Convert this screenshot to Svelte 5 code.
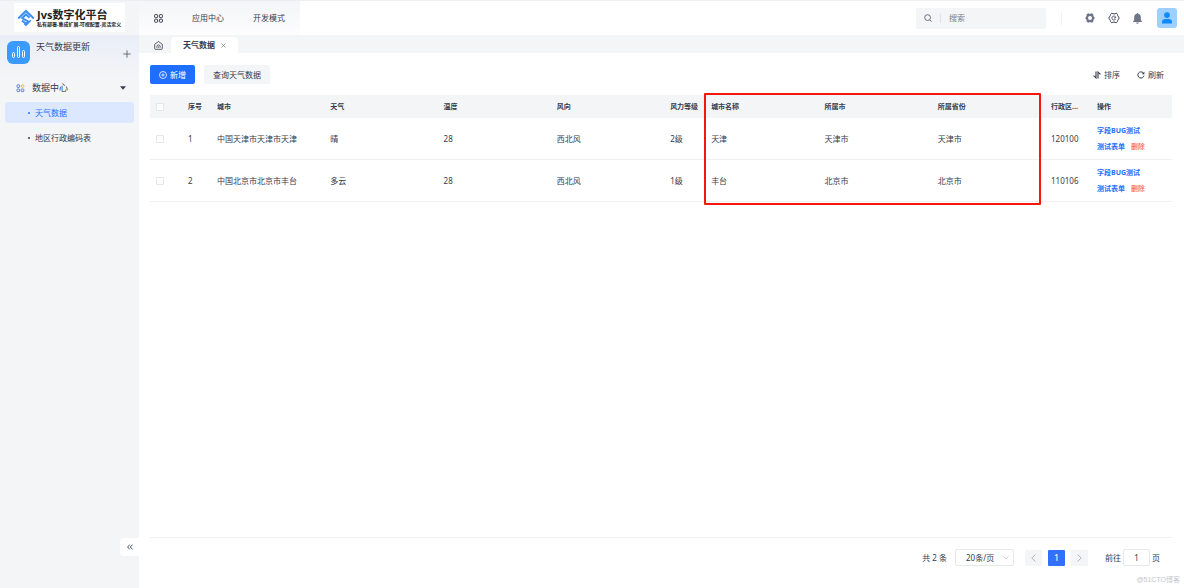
<script lang="ts">
	interface Row {
		id: number;
		city: string;
		weather: string;
		temp: string;
		wind: string;
		level: string;
		name: string;
		belongCity: string;
		province: string;
		code: string;
	}

	const columns = [
		{ label: '城市', cls: '' },
		{ label: '天气', cls: '' },
		{ label: '温度', cls: '' },
		{ label: '风向', cls: '' },
		{ label: '风力等级', cls: 'level' },
		{ label: '城市名称', cls: 'marked' },
		{ label: '所属市', cls: '' },
		{ label: '所属省份', cls: '' },
		{ label: '行政区...', cls: 'code' }
	];

	const rows: Row[] = [
		{
			id: 1,
			city: '中国天津市天津市天津',
			weather: '晴',
			temp: '28',
			wind: '西北风',
			level: '2级',
			name: '天津',
			belongCity: '天津市',
			province: '天津市',
			code: '120100'
		},
		{
			id: 2,
			city: '中国北京市北京市丰台',
			weather: '多云',
			temp: '28',
			wind: '西北风',
			level: '1级',
			name: '丰台',
			belongCity: '北京市',
			province: '北京市',
			code: '110106'
		}
	];

	const pages = ['天气数据', '地区行政编码表'];

	let activePage = $state('天气数据');
	let groupOpen = $state(true);
	let keyword = $state('');
	let selected = $state<number[]>([]);
	let pageSize = $state('20');
	let jumpTo = $state('1');

	let allSelected = $derived(selected.length === rows.length);

	function toggleAll() {
		selected = allSelected ? [] : rows.map((r) => r.id);
	}
</script>

<div class="app">
	<aside>
		<div class="brand">
			<div class="logo">
				<svg width="18" height="18" viewBox="0 0 18 18" fill="none" stroke="#3d8ef5" stroke-width="2">
					<path d="M1.200 9.400 9 2l7.800 7.400" />
					<path d="M12.600 8.700 9 5.400 5.200 9l6.200 3.600L9 14.800l-4-3.400" />
					<path d="M13.800 11.200 9 16.200l-1.600-1.400" stroke-width="1.600" />
				</svg>
				<div>
					<div class="logo-title">Jvs数字化平台</div>
					<div class="logo-sub">私有部署.集成扩展.可视配置.灵活定义</div>
				</div>
			</div>
		</div>

		<div class="side-body">
			<div class="project">
				<span class="project-icon">
					<svg width="15" height="15" viewBox="0 0 15 15" fill="none" stroke="#fff">
						<rect x="1.5" y="7.5" width="2" height="5" rx="1" />
						<rect x="6.5" y="1.5" width="2" height="11" rx="1" />
						<rect x="11.5" y="5.5" width="2" height="7" rx="1" />
					</svg>
				</span>
				<span class="project-name">天气数据更新</span>
				<button class="plain add" aria-label="添加">
					<svg width="8" height="8" viewBox="0 0 8 8" stroke="#5c6270" stroke-width="0.9">
						<path d="M4 0.3v7.4M0.3 4h7.4" />
					</svg>
				</button>
			</div>

			<button class="plain group" onclick={() => (groupOpen = !groupOpen)}>
				<svg width="9" height="9" viewBox="0 0 9 9" fill="none" stroke="#5279bd" stroke-width="0.9">
					<rect x="1" y="0.8" width="2.600" height="2.600" rx="0.600" />
					<path d="M6.600.5 8.200 2.100 6.600 3.700 5 2.100z" stroke="#f0a13c" />
					<rect x="1" y="5" width="2.600" height="2.600" rx="0.600" />
					<rect x="5.200" y="5" width="2.600" height="2.600" rx="0.600" />
				</svg>
				<span>数据中心</span>
				<svg class="caret" width="6" height="4" viewBox="0 0 6 4" fill="#363b4c"><path d="M0 .3h6L3 3.7z" /></svg>
			</button>

			{#if groupOpen}
				<nav>
					{#each pages as page}
						<a href="#{page}" class:active={activePage === page} onclick={() => (activePage = page)}>
							<i></i>{page}
						</a>
					{/each}
				</nav>
			{/if}

			<button class="plain collapse" aria-label="收起">
				<svg width="6" height="6" viewBox="0 0 6 6" fill="none" stroke="#363b4c" stroke-width="0.9">
					<path d="M2.8.6.6 3l2.2 2.4M5.5.6 3.3 3l2.2 2.4" />
				</svg>
			</button>
		</div>
	</aside>

	<div class="content">
		<header>
			<div class="menu">
				<svg width="9" height="9" viewBox="0 0 9 9" fill="none" stroke="#363b4c">
					<rect x="0.6" y="0.6" width="3" height="3" rx="0.700" />
					<rect x="5.4" y="0.6" width="3" height="3" rx="0.700" />
					<rect x="0.6" y="5.2" width="3" height="3" rx="0.700" />
					<rect x="5.4" y="5.2" width="3" height="3" rx="0.700" />
				</svg>
				<a href="#apps">应用中心</a>
				<a href="#dev">开发模式</a>
			</div>

			<label class="search">
				<svg width="8" height="8" viewBox="0 0 8 8" fill="none" stroke="#5c6270" stroke-width="0.9">
					<circle cx="3.6" cy="3.6" r="2.9" />
					<path d="m5.8 5.8 1.8 1.8" />
				</svg>
				<input type="text" placeholder="搜索" aria-label="搜索" bind:value={keyword} />
			</label>

			<div class="tools">
				<button class="plain" aria-label="设置">
					<svg width="10" height="10" viewBox="0 0 10 10">
						<path fill="#6f7588" fill-rule="evenodd" d="M3.2.3 5 1 6.800.300 8.300 1.300 8.400 3.100 9.800 5 8.400 6.900 8.300 8.700 6.800 9.700 5 9 3.200 9.700 1.700 8.700 1.600 6.900.2 5 1.600 3.100 1.700 1.300zM5 3a2 2 0 1 0 0 4 2 2 0 0 0 0-4z" />
					</svg>
				</button>
				<button class="plain" aria-label="系统配置">
					<svg width="12" height="12" viewBox="0 0 12 12" fill="none" stroke="#41475a">
						<path d="M3.600 1.200 5 1.800h2l1.400-.6 1 1.300.4 1.300L11.300 6 9.800 8.200l-.4 1.300-1 1.300-1.400-.6H5l-1.400.6-1-1.300-.4-1.300L.7 6l1.500-2.200.4-1.300z" />
						<path d="M7.700 7A2 2 0 1 1 7.900 5.600L6 6.100" stroke-width="0.900" />
					</svg>
				</button>
				<button class="plain" aria-label="通知">
					<svg width="9" height="11" viewBox="0 0 9 11" fill="#6f7588">
						<path d="M4.5 0c.5 0 .8.4.8.8C6.900 1.200 7.800 2.500 7.800 4v3L9 8.400v.600H0v-.600L1.200 7V4c0-1.500.9-2.800 2.500-3.200 0-.4.3-.8.8-.8z" />
						<path d="M3.200 9.500h2.600a1.300 1.300 0 0 1-2.600 0z" />
					</svg>
				</button>
				<button class="plain avatar" aria-label="用户">
					<svg width="10" height="12" viewBox="0 0 10 12" fill="#0f8bff">
						<circle cx="5" cy="3.1" r="2.9" />
						<path d="M0 11.500V10c0-2 1.300-3 3.200-3h3.600C8.700 7 10 8 10 10v1.500z" />
					</svg>
				</button>
			</div>
		</header>

		<div class="tabs">
			<button class="plain home" aria-label="首页">
				<svg width="9" height="9" viewBox="0 0 9 9" fill="none" stroke="#363b4c" stroke-width="0.8">
					<path d="M.7 3.300 4.500.5l3.800 2.800v4.200c0 .5-.3.800-.8.800h-6c-.5 0-.8-.3-.8-.8z" />
					<path d="M2.900 6.800V5.500a1.600 1.600 0 0 1 3.200 0v1.300M4.500 5.500v1.300" />
				</svg>
			</button>
			<div class="tab">
				<span>{activePage}</span>
				<button class="plain" aria-label="关闭">
					<svg width="5" height="5" viewBox="0 0 5 5" stroke="#6f7588" stroke-width="0.7"><path d="m.5.5 4 4m0-4-4 4" /></svg>
				</button>
			</div>
		</div>

		<main>
			<div class="toolbar">
				<button class="btn primary">
					<svg width="8" height="8" viewBox="0 0 8 8" fill="none" stroke="#fff" stroke-width="0.8">
						<circle cx="4" cy="4" r="3.5" />
						<path d="M4 2.400v3.200M2.400 4h3.200" />
					</svg>
					新增
				</button>
				<button class="btn">查询天气数据</button>
				<div class="actions">
					<button class="plain">
						<svg width="8" height="8" viewBox="0 0 8 8" fill="none" stroke="#363b4c" stroke-width="1.100">
							<path d="M3 .6v6.300L.6 4.700" />
							<path d="M5 7.400V1.100l2.400 2.200" />
						</svg>
						排序
					</button>
					<button class="plain">
						<svg width="8" height="8" viewBox="0 0 8 8" fill="none" stroke="#363b4c">
							<path d="M7 4.600A3.100 3.100 0 1 1 6.200 1.800" />
							<path d="M7.400.6v2.600H4.800z" fill="#363b4c" stroke="none" />
						</svg>
						刷新
					</button>
				</div>
			</div>

			<table>
				<thead>
					<tr>
						<th class="check"><input type="checkbox" aria-label="全选" checked={allSelected} onchange={toggleAll} /></th>
						<th class="index">序号</th>
						{#each columns as col}
							<th class={col.cls}>
								{col.label}
								{#if col.cls === 'marked'}<span class="mark"></span>{/if}
							</th>
						{/each}
						<th class="ops">操作</th>
					</tr>
				</thead>
				<tbody>
					{#each rows as row (row.id)}
						<tr>
							<td class="check"><input type="checkbox" aria-label="选择 {row.id}" value={row.id} bind:group={selected} /></td>
							<td>{row.id}</td>
							<td>{row.city}</td>
							<td>{row.weather}</td>
							<td>{row.temp}</td>
							<td>{row.wind}</td>
							<td>{row.level}</td>
							<td>{row.name}</td>
							<td>{row.belongCity}</td>
							<td>{row.province}</td>
							<td>{row.code}</td>
							<td class="ops">
								<div class="links">
									<button class="plain link">字段BUG测试</button>
									<button class="plain link">测试表单</button>
									<button class="plain link danger">删除</button>
								</div>
							</td>
						</tr>
					{/each}
				</tbody>
			</table>

			<footer>
				<span>共 {rows.length} 条</span>
				<div class="size">
					<select aria-label="每页条数" bind:value={pageSize}>
						<option value="10">10条/页</option>
						<option value="20">20条/页</option>
						<option value="50">50条/页</option>
					</select>
					<svg width="6" height="4" viewBox="0 0 6 4" fill="none" stroke="#b8bcc6" stroke-width="0.7"><path d="m.5.500 2.500 2.500L5.500.5" /></svg>
				</div>
				<div class="pager">
					<button aria-label="上一页" disabled>
						<svg width="5" height="8" viewBox="0 0 5 8" fill="none" stroke="#a9adb7" stroke-width="0.9"><path d="M4.400.600.800 4l3.600 3.400" /></svg>
					</button>
					<button class="current">1</button>
					<button aria-label="下一页" disabled>
						<svg width="5" height="8" viewBox="0 0 5 8" fill="none" stroke="#a9adb7" stroke-width="0.9"><path d="M.600.600 4.200 4 .600 7.400" /></svg>
					</button>
				</div>
				<label class="jump">
					前往
					<input type="text" bind:value={jumpTo} />
					页
				</label>
			</footer>
		</main>
	</div>

	<span class="watermark">@51CTO博客</span>
</div>

<style>
	:global(body) {
		margin: 0;
		background: #fff;
		color: #363b4c;
		font-family: 'Noto Sans', 'Noto Sans CJK SC', sans-serif;
		font-size: 8px;
		line-height: 12px;
	}

	.app {
		position: relative;
		display: flex;
		min-height: 100vh;
	}

	svg {
		display: block;
		flex: none;
	}

	a {
		color: inherit;
		text-decoration: none;
	}

	button,
	input,
	select {
		box-sizing: border-box;
		margin: 0;
		font: inherit;
		color: inherit;
	}

	button {
		cursor: pointer;
	}

	.plain {
		display: flex;
		align-items: center;
		padding: 0;
		border: none;
		background: none;
	}

	aside {
		display: flex;
		flex-direction: column;
		width: 139px;
		flex: none;
		background: #f4f5f7;
	}

	.brand {
		box-sizing: border-box;
		height: 35px;
		padding: 2px 14px;
		border-top: 1px solid #eceef1;
	}

	.logo {
		display: flex;
		align-items: center;
		gap: 2px;
		box-sizing: border-box;
		height: 29px;
		padding-left: 3px;
		background: #fff;
		color: #222;
		font-weight: 700;
		white-space: nowrap;
	}

	.logo-title {
		font-size: 11px;
	}

	.logo-sub {
		font-size: 5px;
		line-height: 6px;
	}

	.side-body {
		flex: 1;
		display: flex;
		flex-direction: column;
		background: linear-gradient(#e9eef7, #f4f5f7 48px);
	}

	.project {
		display: flex;
		padding: 6px 8px 6px 7px;
		font-size: 9px;
	}

	.project-icon {
		display: flex;
		align-items: center;
		justify-content: center;
		width: 23px;
		height: 23px;
		margin-right: 6px;
		border-radius: 6px;
		background: #3a9aff;
	}

	.add {
		margin-left: auto;
		padding-top: 2px;
	}

	.group {
		gap: 7px;
		height: 24px;
		margin-top: 6px;
		padding: 0 13px 0 16px;
		font-size: 9px;
	}

	.caret {
		margin-left: auto;
	}

	nav {
		display: flex;
		flex-direction: column;
		gap: 4px;
		padding: 2px 5px;
	}

	nav a {
		display: flex;
		align-items: center;
		gap: 5px;
		height: 21px;
		padding-left: 23px;
		border-radius: 3px;
	}

	nav i {
		width: 2px;
		height: 2px;
		border-radius: 50%;
		background: currentColor;
	}

	nav a.active {
		background: #dce8ff;
		color: #1e6fff;
	}

	.collapse {
		justify-content: center;
		align-self: flex-end;
		width: 19px;
		height: 18px;
		margin-top: auto;
		margin-bottom: 32px;
		border-radius: 4px 0 0 4px;
		background: #fff;
	}

	.content {
		flex: 1;
		min-width: 0;
		display: flex;
		flex-direction: column;
	}

	header {
		display: flex;
		align-items: center;
		box-sizing: border-box;
		height: 35px;
		padding-right: 7px;
		border-top: 1px solid #eceef1;
	}

	.menu {
		display: flex;
		align-items: center;
		gap: 29px;
		align-self: stretch;
		padding: 0 15px;
		background: linear-gradient(#f4f5f7, #fdfdfe);
	}

	.search {
		display: flex;
		align-items: center;
		box-sizing: border-box;
		width: 130px;
		height: 21px;
		margin-left: auto;
		padding: 0 8px;
		border-radius: 2px;
		background: #f4f5f7;
	}

	.search input {
		flex: 1;
		min-width: 0;
		height: 9px;
		margin-left: 8px;
		padding: 0 0 0 8px;
		border: none;
		border-left: 1px solid #dfe1e6;
		outline: none;
		background: none;
	}

	.search input::placeholder {
		color: #7b8090;
	}

	.tools {
		display: flex;
		align-items: center;
		gap: 13px;
		margin-left: 15px;
		padding-left: 24px;
		background: linear-gradient(#eef0f3, #eef0f3) left / 1px 13px no-repeat;
	}

	.avatar {
		justify-content: center;
		width: 20px;
		height: 20px;
		margin-left: 2px;
		border-radius: 3px;
		background: #9dcfff;
	}

	.tabs {
		display: flex;
		align-items: flex-end;
		height: 18px;
		padding-left: 15px;
		background: #f4f5f7;
	}

	.home {
		height: 16px;
	}

	.tab {
		display: flex;
		align-items: center;
		gap: 6px;
		height: 16px;
		margin-left: 8px;
		padding: 0 12px;
		border-radius: 4px 4px 0 0;
		background: #fff;
		font-weight: 700;
	}

	main {
		flex: 1;
		display: flex;
		flex-direction: column;
		padding: 12px 12px 0 11px;
	}

	.toolbar {
		display: flex;
		gap: 9px;
		margin-bottom: 11px;
	}

	.btn {
		display: flex;
		align-items: center;
		gap: 3px;
		height: 19px;
		padding: 0 9px;
		border: none;
		border-radius: 2px;
		background: #f4f5f7;
	}

	.btn.primary {
		background: #1e6fff;
		color: #fff;
	}

	.actions {
		display: flex;
		gap: 17px;
		margin-left: auto;
		padding-right: 8px;
	}

	.actions .plain {
		gap: 3px;
	}

	table {
		width: 100%;
		table-layout: fixed;
		border-collapse: separate;
		border-spacing: 0;
	}

	th,
	td {
		box-sizing: border-box;
		padding: 0 0 0 6px;
		text-align: left;
		white-space: nowrap;
	}

	th {
		height: 23px;
		background: #f4f5f7;
		font-size: 7px;
		font-weight: 700;
	}

	td {
		height: 42px;
		border-bottom: 1px solid #eef0f3;
	}

	th.check {
		width: 32px;
	}

	th.index {
		width: 29px;
	}

	th.level {
		width: 41px;
	}

	th.code {
		width: 46px;
	}

	th.ops {
		width: 81px;
	}

	.marked {
		position: relative;
	}

	.mark {
		position: absolute;
		top: -2px;
		left: -1px;
		z-index: 1;
		box-sizing: border-box;
		width: calc(300% - 3px);
		height: 112px;
		border: 2px solid #f5160c;
		border-radius: 1px;
		pointer-events: none;
	}

	input[type='checkbox'] {
		appearance: none;
		display: block;
		width: 8px;
		height: 8px;
		border: 1px solid #e2e5ea;
		border-radius: 1px;
		background: #fff;
	}

	input[type='checkbox']:checked {
		border-color: #1e6fff;
		background: #1e6fff;
	}

	.links {
		display: flex;
		flex-wrap: wrap;
		column-gap: 6px;
		row-gap: 4px;
		width: 60px;
	}

	.link {
		color: #1e6fff;
		font-size: 7px;
		font-weight: 700;
	}

	.danger {
		color: #ff5b5b;
		font-weight: 500;
	}

	footer {
		display: flex;
		align-items: center;
		justify-content: flex-end;
		height: 39px;
		margin-top: auto;
		margin-bottom: 11px;
		padding-right: 12px;
		border-top: 1px solid #eef0f3;
	}

	.size {
		position: relative;
		margin: 0 11px 0 8px;
	}

	.size select {
		appearance: none;
		display: block;
		width: 59px;
		height: 17px;
		padding: 0 0 0 10px;
		border: 1px solid #e6e8ec;
		border-radius: 2px;
		background: #fff;
	}

	.size svg {
		position: absolute;
		right: 5px;
		top: 7px;
		pointer-events: none;
	}

	.pager {
		display: flex;
		gap: 6px;
	}

	.pager button {
		display: flex;
		align-items: center;
		justify-content: center;
		width: 17px;
		height: 16px;
		padding: 0;
		border: none;
		border-radius: 1px;
		background: #f4f5f7;
	}

	.pager .current {
		background: #3370ff;
		color: #fff;
		font-weight: 500;
	}

	.jump {
		display: flex;
		align-items: center;
		gap: 2px;
		margin-left: 17px;
	}

	.jump input {
		width: 27px;
		height: 17px;
		padding: 0;
		border: 1px solid #e6e8ec;
		border-radius: 2px;
		text-align: center;
	}

	.watermark {
		position: absolute;
		right: 4px;
		bottom: 2px;
		color: #c4c6cb;
		font-family: 'Liberation Sans', 'Noto Sans CJK SC', sans-serif;
		font-size: 7px;
	}
</style>
